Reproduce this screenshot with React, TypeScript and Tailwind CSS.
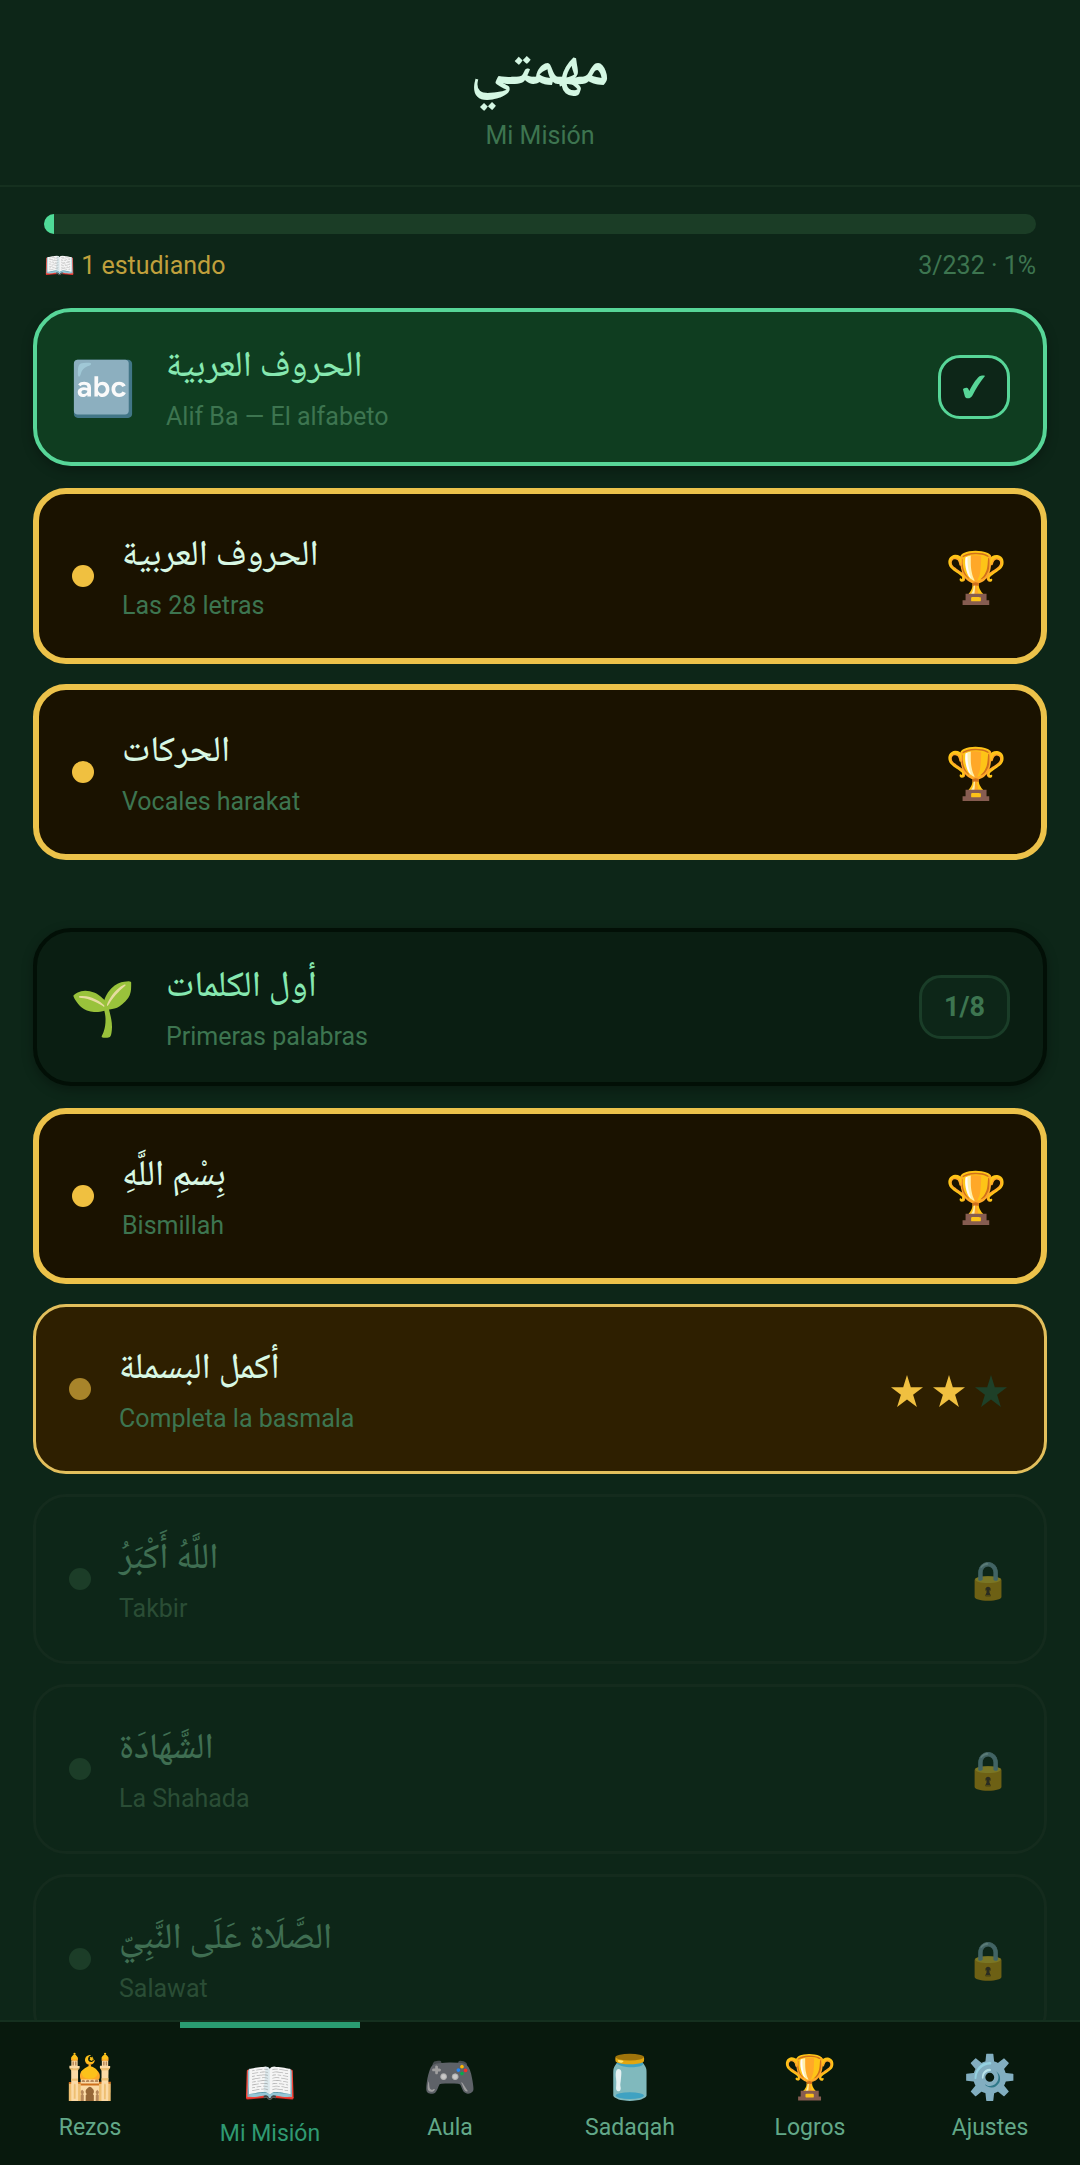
import clsx from "clsx";

// ── Data ──────────────────────────────────────────────────────────────────────

type LessonState = "mastered" | "studying" | "locked";

interface Lesson {
  arabic: string;
  title: string;
  state: LessonState;
  stars?: number;
}

interface Section {
  icon: string;
  arabic: string;
  title: string;
  done: number;
  total: number;
  lessons: Lesson[];
}

const SECTIONS: Section[] = [
  {
    icon: "🔤",
    arabic: "الحروف العربية",
    title: "Alif Ba — El alfabeto",
    done: 2,
    total: 2,
    lessons: [
      { arabic: "الحروف العربية", title: "Las 28 letras", state: "mastered" },
      { arabic: "الحركات", title: "Vocales harakat", state: "mastered" },
    ],
  },
  {
    icon: "🌱",
    arabic: "أول الكلمات",
    title: "Primeras palabras",
    done: 1,
    total: 8,
    lessons: [
      { arabic: "بِسْمِ اللَّهِ", title: "Bismillah", state: "mastered" },
      { arabic: "أكمل البسملة", title: "Completa la basmala", state: "studying", stars: 2 },
      { arabic: "اللَّهُ أَكْبَرُ", title: "Takbir", state: "locked" },
      { arabic: "الشَّهَادَة", title: "La Shahada", state: "locked" },
      { arabic: "الصَّلَاة عَلَى النَّبِيّ", title: "Salawat", state: "locked" },
    ],
  },
];

const TABS = [
  { icon: "🕌", label: "Rezos" },
  { icon: "📖", label: "Mi Misión" },
  { icon: "🎮", label: "Aula" },
  { icon: "🫙", label: "Sadaqah" },
  { icon: "🏆", label: "Logros" },
  { icon: "⚙️", label: "Ajustes" },
];

const ARABIC = "font-['Noto_Naskh_Arabic','Noto_Sans_Arabic','DejaVu_Sans',serif]";
const EMOJI = "font-['Noto_Color_Emoji',sans-serif]";

// ── Section header ────────────────────────────────────────────────────────────

function SectionCard({ section }: { section: Section }) {
  const complete = section.done === section.total;
  return (
    <button
      className={clsx(
        "flex w-full items-center rounded-[38px] border-4 px-[33px] py-[29px] text-left shadow-[0_4px_12px_rgba(0,0,0,0.3)]",
        complete ? "border-[#57d698] bg-[#0f3d20]" : "border-[#020f06] bg-[#0a1e12]",
      )}
    >
      <span className={clsx("w-[68px] shrink-0 pt-1 text-[53px] leading-[60px]", EMOJI)}>{section.icon}</span>
      <span className="ml-7 flex flex-1 flex-col items-start">
        <span lang="ar" dir="rtl" className={clsx("mb-1 text-[36px] leading-14 font-medium text-[#86e8b0]", ARABIC)}>
          {section.arabic}
        </span>
        <span className="text-[25px] leading-8 text-[#3d7550]">{section.title}</span>
      </span>
      <span
        className={clsx(
          "flex h-16 items-center justify-center rounded-[22px] border-3 bg-[#0d2618] px-[22px] text-[27px] font-bold",
          complete ? "border-[#57d698] text-[#57d698]" : "border-[#1a3d28] text-[#3d7550]",
        )}
      >
        {complete ? (
          <svg viewBox="0 0 22 24" className="h-6 w-[22px] fill-current" role="img" aria-label="Completado">
            <path d="M0 14.500c.2-1.500 4.200-2.600 5.200-.8l1.200 2.300C9 10.500 12.700 4.500 16.500 1.300 17.700.4 19.700.3 21.300.5c.7.2.6.8.1 1.300C17 7 13 13.500 9.600 20.300 8 24 2.900 24.300 1.900 21.500z" />
          </svg>
        ) : (
          `${section.done}/${section.total}`
        )}
      </span>
    </button>
  );
}

// ── Lesson row ────────────────────────────────────────────────────────────────

function Stars({ count }: { count: number }) {
  return (
    <span className="flex gap-[10px] pt-1 pr-1">
      {[0, 1, 2].map((i) => (
        <svg key={i} viewBox="0 0 32 32" className={clsx("size-8", i < count ? "fill-[#f0c040]" : "fill-[#1e4028]")}>
          <path d="M16 0l3.800 12.200H32l-9.900 7.600L25.900 32 16 24.500 6.100 32l3.800-12.200L0 12.200h12.200z" />
        </svg>
      ))}
    </span>
  );
}

function LessonCard({ lesson }: { lesson: Lesson }) {
  const { state } = lesson;
  return (
    <button
      disabled={state === "locked"}
      className={clsx(
        "flex w-full items-center rounded-[33px] px-[33px] py-9 text-left",
        state === "mastered" && "border-6 border-[#ecc24a] bg-[#1a1200]",
        state === "studying" && "border-3 border-[#e2bf5c] bg-[#2e1f00]",
        state === "locked" && "border-3 border-[#142b1d]",
      )}
    >
      <span
        className={clsx(
          "size-[22px] shrink-0 rounded-full",
          state === "mastered" && "bg-[#f0c040]",
          state === "studying" && "bg-[#a8842a]",
          state === "locked" && "bg-[#1c3d28]",
        )}
      />
      <span className="ml-7 flex flex-1 flex-col items-start">
        <span
          lang="ar"
          dir="rtl"
          className={clsx(
            "mb-1 text-[36px] leading-14 font-medium",
            ARABIC,
            state === "locked" ? "text-[#3f6e52]" : "text-[#d8f8e4]",
          )}
        >
          {lesson.arabic}
        </span>
        <span className={clsx("text-[25px] leading-8", state === "locked" ? "text-[#2a4d35]" : "text-[#3d7550]")}>
          {lesson.title}
        </span>
      </span>
      {state === "mastered" && <span className={clsx("pt-1 text-[50px] leading-[60px]", EMOJI)}>🏆</span>}
      {state === "studying" && <Stars count={lesson.stars ?? 0} />}
      {state === "locked" && <span className={clsx("pt-1 text-[37px] leading-[44px] opacity-45", EMOJI)}>🔒</span>}
    </button>
  );
}

// ── Tab bar ───────────────────────────────────────────────────────────────────

function TabBar({ active }: { active: string }) {
  return (
    <nav className="grid h-[145px] shrink-0 grid-cols-6 border-t-2 border-[#15301f] bg-[#08190d]">
      {TABS.map((tab) => {
        const selected = tab.label === active;
        return (
          <button
            key={tab.label}
            aria-current={selected ? "page" : undefined}
            className={clsx(
              "flex flex-col items-center pt-[25px] text-[23px]",
              selected ? "border-t-6 border-[#2a9d72] text-[#2f9a72]" : "text-[#62a888]",
            )}
          >
            <span className={clsx("text-[43px] leading-[60px]", EMOJI)}>{tab.icon}</span>
            <span className="mt-[5px] leading-8">{tab.label}</span>
          </button>
        );
      })}
    </nav>
  );
}

// ── Page ──────────────────────────────────────────────────────────────────────

export default function App() {
  const done = 3;
  const total = 232;
  const percent = Math.round((done / total) * 100);

  return (
    <div className="flex h-screen flex-col bg-[#0d2618] font-[Roboto,sans-serif]">
      <header className="flex shrink-0 flex-col items-center border-b-2 border-[#15301f] pt-8 pb-[33px]">
        <h1 lang="ar" dir="rtl" className={clsx("mb-2 text-[60px] leading-[80px] font-bold text-[#d4f7e3]", ARABIC)}>
          مهمتي
        </h1>
        <p className="text-[25px] leading-8 text-[#3d7550]">Mi Misión</p>
      </header>

      <div className="shrink-0 px-11 pt-[27px] pb-[26px]">
        <div className="h-5 overflow-hidden rounded-full bg-[#1b3d26]">
          <div className="h-full bg-[#4fdb98]" style={{ width: `${percent}%` }} />
        </div>
        <div className="mt-4 flex items-center justify-between text-[25px] leading-8">
          <span className="flex items-center gap-[6px] text-[#c0a03c]">
            <span className={EMOJI}>📖</span>
            <span>1 estudiando</span>
          </span>
          <span className="text-[#3d7550]">
            {done}/{total} · {percent}%
          </span>
        </div>
      </div>

      <main className="flex min-h-0 flex-1 flex-col gap-[68px] overflow-hidden px-[33px]">
        {SECTIONS.map((section) => (
          <section key={section.title} className="shrink-0">
            <SectionCard section={section} />
            <div className="mt-[22px] flex flex-col gap-5">
              {section.lessons.map((lesson) => (
                <LessonCard key={lesson.title} lesson={lesson} />
              ))}
            </div>
          </section>
        ))}
      </main>

      <TabBar active="Mi Misión" />
    </div>
  );
}
